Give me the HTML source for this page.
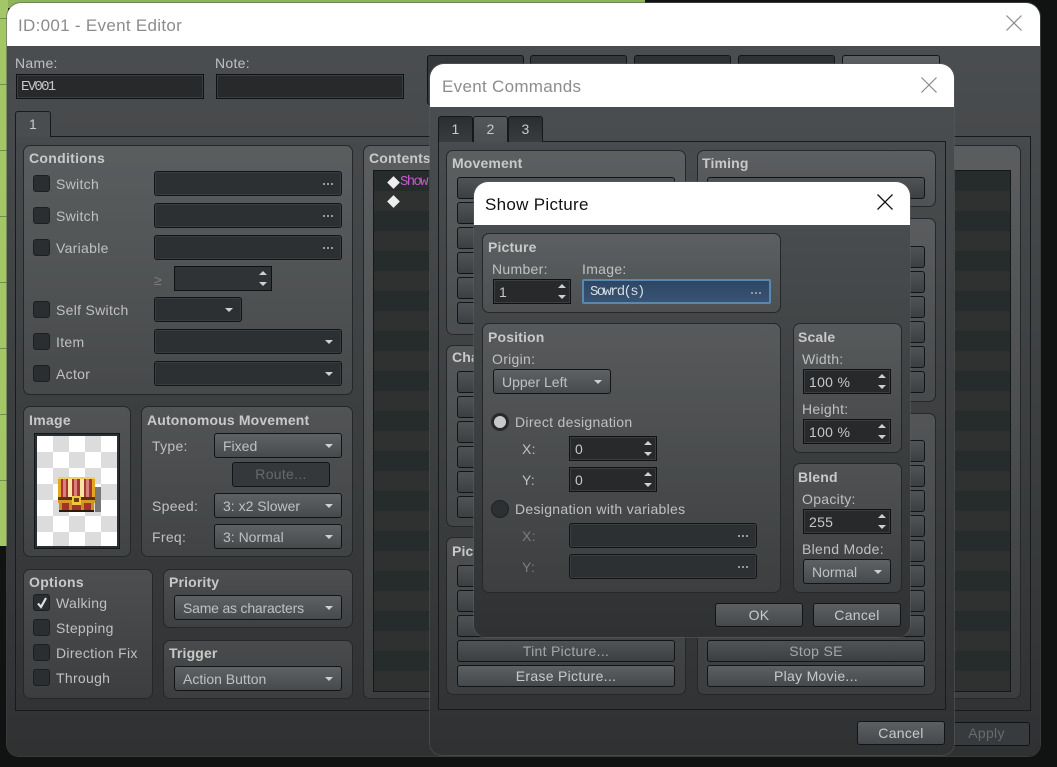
<!DOCTYPE html>
<html><head><meta charset="utf-8"><style>
*{box-sizing:border-box}
html,body{margin:0;padding:0;width:1057px;height:767px;overflow:hidden;background:#111212}
body{position:relative;font-family:"Liberation Sans",sans-serif;font-size:14px;letter-spacing:.3px;color:#bfc1c1}
div,svg{position:absolute}
.win{border-radius:14px 14px 12px 12px;overflow:hidden;background:linear-gradient(#4c4f51,#2f3132);box-shadow:0 0 0 1px rgba(90,93,94,.55)}
.bar{left:0;top:0;right:0;background:#fff;font-size:17px;letter-spacing:.3px;color:#8c8c8c;white-space:nowrap}
.pane{border:1px solid #181b1d}
.g{border:1px solid #25282a;border-radius:7px;background:linear-gradient(rgba(255,255,255,.11),rgba(255,255,255,.05))}
.t{white-space:nowrap;line-height:16px;height:16px}
.h{font-weight:bold;color:#c8caca;letter-spacing:.15px}
.d{color:#7b7e7f}
.in{background:#2d3032;border:1px solid #121517;border-radius:3px;box-shadow:inset 0 0 0 1px #3a3d3f;color:#c8c8c8;line-height:24px;padding-left:8px}
.box{background:#27292b;border:1px solid #0f1214;box-shadow:inset 0 0 0 1px #3b3e40;color:#c8c8c8;line-height:24px;padding-left:5px}
.sq{border-radius:0}
.m{font-family:"Liberation Mono",monospace;font-size:14px;letter-spacing:-1.7px}
.dots:after{content:"";position:absolute;right:8px;top:11px;width:2px;height:2px;background:#999;box-shadow:-4px 0 #999,-8px 0 #999}
.cb{border:1px solid #1d2022;border-radius:3px;background:#2b2e30;height:17px;width:17px;color:#d8d8d8}
.cmb{background:linear-gradient(#5e6264,#474a4c);border:1px solid #121517;border-radius:3px;color:#bfc1c1;line-height:24px;padding-left:8px;white-space:nowrap;letter-spacing:0}
.cmb:after,.dk:after{content:"";position:absolute;right:8px;top:10px;border-left:4px solid transparent;border-right:4px solid transparent;border-top:4px solid #cfd0d0}
.dk{background:#2d3032;border:1px solid #121517;border-radius:3px;box-shadow:inset 0 0 0 1px #3a3d3f}
.sp:before{content:"";position:absolute;right:4px;top:4px;border-left:4px solid transparent;border-right:4px solid transparent;border-bottom:4px solid #d0d0d0}
.sp:after{content:"";position:absolute;right:4px;bottom:4px;border-left:4px solid transparent;border-right:4px solid transparent;border-top:4px solid #d0d0d0}
.b{background:linear-gradient(#5c6062,#46494b);border:1px solid #121517;border-radius:3px;color:#c8caca;text-align:center;line-height:21px;white-space:nowrap}
.b2{background:linear-gradient(#4f5355,#3d4042);color:#a5a7a7}
.off{background:#35383a;color:#666a6b}
.tab{background:linear-gradient(#2b2e30,#393c3e);border:1px solid #16191b;border-bottom:0;border-radius:3px 3px 0 0;text-align:center;line-height:24px;color:#c8c8c8}
.tab.on{background:linear-gradient(#53575a,#4c4f51);z-index:2;height:27px}
.r{border-radius:50%;width:18px;height:18px;background:#2d3032;border:1px solid #1f2224}
</style></head><body>

<div style="left:0;top:0;width:645px;height:8px;background:#8fb55a"></div>
<div style="left:0;top:0;width:8px;height:546px;background:#a3c666"></div>
<div style="left:0;top:18px;width:8px;height:1px;background:#6f9146"></div>
<div style="left:0;top:84px;width:8px;height:1px;background:#6f9146"></div>
<div style="left:0;top:150px;width:8px;height:1px;background:#6f9146"></div>
<div style="left:0;top:216px;width:8px;height:1px;background:#6f9146"></div>
<div style="left:0;top:282px;width:8px;height:1px;background:#6f9146"></div>
<div style="left:0;top:348px;width:8px;height:1px;background:#6f9146"></div>
<div style="left:0;top:414px;width:8px;height:1px;background:#6f9146"></div>
<div style="left:0;top:480px;width:8px;height:1px;background:#6f9146"></div>

<!-- WINDOW 1 -->
<div class="win" style="left:7px;top:3px;width:1033px;height:753px">
<div class="bar" style="height:43px;line-height:45px;padding-left:11px">ID:001 - Event Editor</div>
<svg style="left:999px;top:12px" width="16" height="16" viewBox="0 0 16 16"><path d="M.5.5l15 15M15.5.5l-15 15" stroke="#8a8a8a" stroke-width="1.2" fill="none"/></svg>
</div>

<div class="t" style="left:15px;top:55px">Name:</div>
<div class="box m" style="left:16px;top:74px;width:188px;height:25px;padding-left:4px">EV001</div>
<div class="t" style="left:215px;top:55px">Note:</div>
<div class="box" style="left:216px;top:74px;width:188px;height:25px"></div>

<div class="b off" style="left:427px;top:55px;width:97px;height:50px"></div>
<div class="b off" style="left:530px;top:55px;width:97px;height:50px"></div>
<div class="b off" style="left:634px;top:55px;width:97px;height:50px;background:#2f3234"></div>
<div class="b off" style="left:738px;top:55px;width:97px;height:50px;background:#2f3234"></div>
<div class="b" style="left:842px;top:55px;width:98px;height:50px"></div>

<div class="pane" style="left:15px;top:136px;width:1016px;height:575px"></div>
<div class="tab on" style="left:15px;top:111px;width:36px;height:26px;background:#4a4d4f;border-color:#181b1d">1</div>

<div class="g" style="left:23px;top:145px;width:330px;height:250px"></div>
<div class="t h" style="left:29px;top:150px;letter-spacing:.3px">Conditions</div>
<div class="cb" style="left:33px;top:175px"></div><div class="t" style="left:56px;top:176px">Switch</div>
<div class="in dots" style="left:154px;top:171px;width:188px;height:25px"></div>
<div class="cb" style="left:33px;top:207px"></div><div class="t" style="left:56px;top:208px">Switch</div>
<div class="in dots" style="left:154px;top:203px;width:188px;height:25px"></div>
<div class="cb" style="left:33px;top:239px"></div><div class="t" style="left:56px;top:240px">Variable</div>
<div class="in dots" style="left:154px;top:235px;width:188px;height:25px"></div>
<div class="t d" style="left:154px;top:272px;font-size:14px">≥</div>
<div class="box sp" style="left:174px;top:266px;width:98px;height:25px;box-shadow:none;background:#303335"></div>
<div class="cb" style="left:33px;top:301px"></div><div class="t" style="left:56px;top:302px">Self Switch</div>
<div class="dk" style="left:154px;top:297px;width:88px;height:25px"></div>
<div class="cb" style="left:33px;top:333px"></div><div class="t" style="left:56px;top:334px">Item</div>
<div class="dk" style="left:154px;top:329px;width:188px;height:25px"></div>
<div class="cb" style="left:33px;top:365px"></div><div class="t" style="left:56px;top:366px">Actor</div>
<div class="dk" style="left:154px;top:361px;width:188px;height:25px"></div>

<div class="g" style="left:23px;top:406px;width:108px;height:151px"></div>
<div class="t h" style="left:29px;top:412px;letter-spacing:.3px">Image</div>
<div style="left:34px;top:433px;width:86px;height:116px;background:#2c2f31;border:1px solid #14171a"></div>
<div style="left:37px;top:436px;width:80px;height:110px;background-color:#fff;background-image:conic-gradient(#dcdcdc 25%,#fff 0 50%,#dcdcdc 0 75%,#fff 0);background-size:32px 32px"></div>
<div style="left:95px;top:487px;width:6px;height:25px;background:#777"></div>
<svg style="left:58px;top:477px" width="37" height="35" viewBox="0 0 37 35" shape-rendering="crispEdges">
<rect x="0" y="0" width="37" height="21" fill="#e0a820"/>
<rect x="0" y="0" width="37" height="2" fill="#f0d060"/>
<rect x="3" y="2" width="7" height="18" fill="#a83434"/><rect x="5" y="2" width="3" height="18" fill="#d8807a"/>
<rect x="14" y="2" width="8" height="18" fill="#a83434"/><rect x="16" y="2" width="3" height="18" fill="#d8807a"/>
<rect x="26" y="2" width="8" height="18" fill="#a83434"/><rect x="28" y="2" width="3" height="18" fill="#d8807a"/>
<rect x="10" y="2" width="4" height="18" fill="#f6e4a0"/><rect x="22" y="2" width="4" height="18" fill="#f6e4a0"/>
<rect x="0" y="20" width="37" height="3" fill="#5a3208"/>
<rect x="0" y="23" width="37" height="3" fill="#d89a20"/>
<rect x="1" y="26" width="35" height="8" fill="#a0342c"/>
<rect x="1" y="26" width="3" height="8" fill="#c8901c"/><rect x="11" y="26" width="3" height="8" fill="#c8901c"/><rect x="23" y="26" width="3" height="8" fill="#c8901c"/><rect x="33" y="26" width="3" height="8" fill="#c8901c"/>
<rect x="1" y="33" width="35" height="2" fill="#2a1a08"/>
<rect x="14" y="19" width="9" height="9" fill="#f0c840"/><rect x="16" y="21" width="5" height="4" fill="#6a4010"/>
</svg>

<div class="g" style="left:141px;top:406px;width:212px;height:151px"></div>
<div class="t h" style="left:147px;top:412px">Autonomous Movement</div>
<div class="t" style="left:152px;top:438px">Type:</div>
<div class="cmb" style="left:214px;top:433px;width:128px;height:25px">Fixed</div>
<div class="b off" style="left:232px;top:462px;width:98px;height:25px;line-height:23px">Route...</div>
<div class="t" style="left:152px;top:498px">Speed:</div>
<div class="cmb" style="left:214px;top:493px;width:128px;height:25px">3: x2 Slower</div>
<div class="t" style="left:152px;top:529px">Freq:</div>
<div class="cmb" style="left:214px;top:524px;width:128px;height:25px">3: Normal</div>

<div class="g" style="left:23px;top:569px;width:130px;height:130px"></div>
<div class="t h" style="left:29px;top:574px;letter-spacing:.3px">Options</div>
<div class="cb" style="left:33px;top:594px"><svg style="left:2px;top:2px" width="12" height="12" viewBox="0 0 12 12"><path d="M2 6.5l3 3.5 5-9" stroke="#e0e0e0" stroke-width="2.2" fill="none"/></svg></div>
<div class="t" style="left:56px;top:595px">Walking</div>
<div class="cb" style="left:33px;top:619px"></div><div class="t" style="left:56px;top:620px">Stepping</div>
<div class="cb" style="left:33px;top:644px"></div><div class="t" style="left:56px;top:645px">Direction Fix</div>
<div class="cb" style="left:33px;top:669px"></div><div class="t" style="left:56px;top:670px">Through</div>

<div class="g" style="left:163px;top:569px;width:190px;height:59px"></div>
<div class="t h" style="left:169px;top:574px">Priority</div>
<div class="cmb" style="left:174px;top:595px;width:168px;height:25px;letter-spacing:-.2px">Same as characters</div>
<div class="g" style="left:163px;top:640px;width:190px;height:59px"></div>
<div class="t h" style="left:169px;top:645px">Trigger</div>
<div class="cmb" style="left:174px;top:666px;width:168px;height:25px">Action Button</div>

<div class="g" style="left:363px;top:145px;width:658px;height:554px"></div>
<div class="t h" style="left:369px;top:150px">Contents</div>
<div style="left:373px;top:170px;width:638px;height:522px;border:1px solid #15181a;background:repeating-linear-gradient(#262b2b 0 20px,#2f3030 20px 40px)"></div>
<div style="left:388.5px;top:177.5px;width:9px;height:9px;background:#eee;transform:rotate(45deg)"></div>
<div style="left:388.5px;top:197px;width:9px;height:9px;background:#eee;transform:rotate(45deg)"></div>
<div class="t m" style="left:400px;top:174px;color:#c05cca">Show Picture</div>

<div class="b off" style="left:943px;top:722px;width:87px;height:24px;background:#383b3d;color:#686b6c">Apply</div>

<!-- WINDOW 2 -->
<div class="win" style="left:430px;top:64px;width:524px;height:691px">
<div class="bar" style="height:43px;line-height:45px;padding-left:12px">Event Commands</div>
<svg style="left:491px;top:13px" width="16" height="16" viewBox="0 0 16 16"><path d="M.5.5l15 15M15.5.5l-15 15" stroke="#8a8a8a" stroke-width="1.2" fill="none"/></svg>
</div>
<div class="pane" style="left:438px;top:141px;width:508px;height:569px"></div>
<div class="tab" style="left:438px;top:116px;width:35px;height:26px">1</div>
<div class="tab on" style="left:473px;top:116px;width:35px;height:26px">2</div>
<div class="tab" style="left:508px;top:116px;width:35px;height:26px">3</div>

<div class="g" style="left:446px;top:150px;width:240px;height:185px"></div>
<div class="t h" style="left:452px;top:155px">Movement</div>
<div class="b b2" style="left:457px;top:177px;width:218px;height:22px"></div>
<div class="b b2" style="left:457px;top:202px;width:218px;height:22px"></div>
<div class="b b2" style="left:457px;top:227px;width:218px;height:22px"></div>
<div class="b b2" style="left:457px;top:252px;width:218px;height:22px"></div>
<div class="b b2" style="left:457px;top:277px;width:218px;height:22px"></div>
<div class="b b2" style="left:457px;top:302px;width:218px;height:22px"></div>

<div class="g" style="left:446px;top:345px;width:240px;height:182px"></div>
<div class="t h" style="left:452px;top:349px">Character</div>
<div class="b b2" style="left:457px;top:371px;width:218px;height:22px"></div>
<div class="b b2" style="left:457px;top:396px;width:218px;height:22px"></div>
<div class="b b2" style="left:457px;top:421px;width:218px;height:22px"></div>
<div class="b b2" style="left:457px;top:446px;width:218px;height:22px"></div>
<div class="b b2" style="left:457px;top:471px;width:218px;height:22px"></div>
<div class="b b2" style="left:457px;top:496px;width:218px;height:22px"></div>

<div class="g" style="left:446px;top:537px;width:240px;height:158px"></div>
<div class="t h" style="left:452px;top:543px">Picture</div>
<div class="b b2" style="left:457px;top:565px;width:218px;height:22px"></div>
<div class="b b2" style="left:457px;top:590px;width:218px;height:22px"></div>
<div class="b b2" style="left:457px;top:615px;width:218px;height:22px"></div>
<div class="b b2" style="left:457px;top:640px;width:218px;height:22px">Tint Picture...</div>
<div class="b" style="left:457px;top:665px;width:218px;height:22px">Erase Picture...</div>

<div class="g" style="left:697px;top:150px;width:239px;height:57px"></div>
<div class="t h" style="left:702px;top:155px">Timing</div>
<div class="b b2" style="left:707px;top:177px;width:218px;height:22px"></div>
<div class="g" style="left:697px;top:218px;width:239px;height:184px"></div>
<div class="b b2" style="left:707px;top:246px;width:218px;height:22px"></div>
<div class="b b2" style="left:707px;top:271px;width:218px;height:22px"></div>
<div class="b b2" style="left:707px;top:296px;width:218px;height:22px"></div>
<div class="b b2" style="left:707px;top:321px;width:218px;height:22px"></div>
<div class="b b2" style="left:707px;top:346px;width:218px;height:22px"></div>
<div class="b b2" style="left:707px;top:371px;width:218px;height:22px"></div>
<div class="g" style="left:697px;top:413px;width:239px;height:282px"></div>
<div class="b b2" style="left:707px;top:440px;width:218px;height:22px"></div>
<div class="b b2" style="left:707px;top:465px;width:218px;height:22px"></div>
<div class="b b2" style="left:707px;top:490px;width:218px;height:22px"></div>
<div class="b b2" style="left:707px;top:515px;width:218px;height:22px"></div>
<div class="b b2" style="left:707px;top:540px;width:218px;height:22px"></div>
<div class="b b2" style="left:707px;top:565px;width:218px;height:22px"></div>
<div class="b b2" style="left:707px;top:590px;width:218px;height:22px"></div>
<div class="b b2" style="left:707px;top:615px;width:218px;height:22px"></div>
<div class="b b2" style="left:707px;top:640px;width:218px;height:22px">Stop SE</div>
<div class="b" style="left:707px;top:665px;width:218px;height:22px">Play Movie...</div>

<div class="b" style="left:857px;top:721px;width:88px;height:24px;line-height:22px">Cancel</div>

<!-- WINDOW 3 -->
<div class="win" style="left:474px;top:182px;width:436px;height:455px">
<div class="bar" style="height:43px;line-height:45px;padding-left:11px;color:#111">Show Picture</div>
<svg style="left:403px;top:12px" width="16" height="16" viewBox="0 0 16 16"><path d="M.5.5l15 15M15.5.5l-15 15" stroke="#111" stroke-width="1.3" fill="none"/></svg>
</div>

<div class="g" style="left:482px;top:233px;width:299px;height:80px"></div>
<div class="t h" style="left:488px;top:239px">Picture</div>
<div class="t" style="left:492px;top:261px">Number:</div>
<div class="box sp" style="left:493px;top:279px;width:78px;height:25px">1</div>
<div class="t" style="left:582px;top:261px">Image:</div>
<div class="dots m" style="left:582px;top:279px;width:189px;height:25px;background:linear-gradient(#2d4665,#385474);border:2px solid #5b88ad;color:#d8dde2;line-height:22px;padding-left:6px;border-radius:2px">Sowrd(s)</div>

<div class="g" style="left:482px;top:323px;width:299px;height:270px"></div>
<div class="t h" style="left:488px;top:329px">Position</div>
<div class="t" style="left:492px;top:351px">Origin:</div>
<div class="cmb" style="left:493px;top:369px;width:118px;height:25px">Upper Left</div>
<div class="r" style="left:491px;top:413px;border:3px solid #272a2c;background:#c9c9c9"></div>
<div class="t" style="left:515px;top:414px">Direct designation</div>
<div class="t" style="left:522px;top:441px">X:</div>
<div class="box sp" style="left:569px;top:436px;width:88px;height:25px">0</div>
<div class="t" style="left:522px;top:472px">Y:</div>
<div class="box sp" style="left:569px;top:467px;width:88px;height:25px">0</div>
<div class="r" style="left:491px;top:500px"></div>
<div class="t" style="left:515px;top:501px">Designation with variables</div>
<div class="t d" style="left:522px;top:528px">X:</div>
<div class="in dots" style="left:569px;top:523px;width:188px;height:25px"></div>
<div class="t d" style="left:522px;top:559px">Y:</div>
<div class="in dots" style="left:569px;top:554px;width:188px;height:25px"></div>

<div class="g" style="left:793px;top:323px;width:109px;height:130px"></div>
<div class="t h" style="left:798px;top:329px">Scale</div>
<div class="t" style="left:802px;top:351px">Width:</div>
<div class="box sp" style="left:803px;top:369px;width:88px;height:25px">100 %</div>
<div class="t" style="left:802px;top:401px">Height:</div>
<div class="box sp" style="left:803px;top:419px;width:88px;height:25px">100 %</div>

<div class="g" style="left:793px;top:463px;width:109px;height:130px"></div>
<div class="t h" style="left:798px;top:469px">Blend</div>
<div class="t" style="left:802px;top:491px">Opacity:</div>
<div class="box sp" style="left:803px;top:509px;width:88px;height:25px">255</div>
<div class="t" style="left:802px;top:541px">Blend Mode:</div>
<div class="cmb" style="left:803px;top:559px;width:88px;height:25px">Normal</div>

<div class="b" style="left:715px;top:603px;width:88px;height:24px;line-height:22px">OK</div>
<div class="b" style="left:813px;top:603px;width:88px;height:24px;line-height:22px">Cancel</div>
</body></html>
